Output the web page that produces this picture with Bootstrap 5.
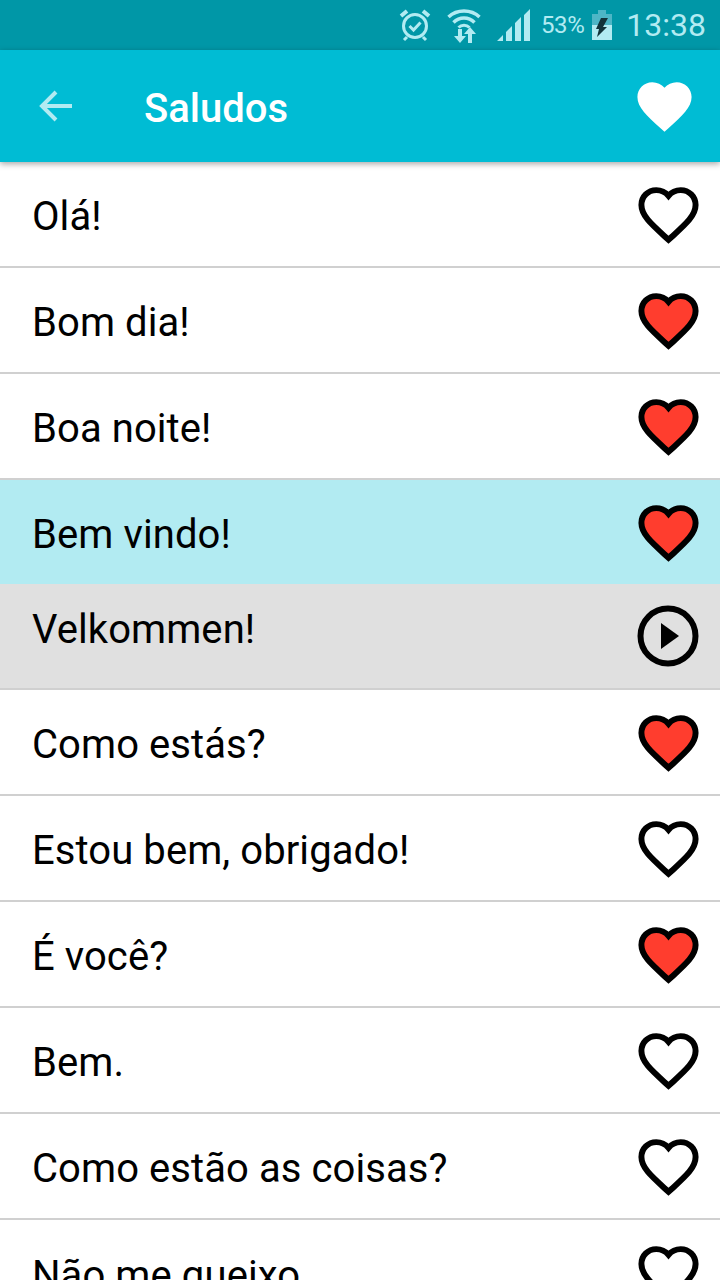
<!DOCTYPE html>
<html lang="en">
<head>
    <meta charset="UTF-8">
    <meta name="viewport" content="width=device-width, initial-scale=1.0">
    <title>Saludos</title>
    <link href="https://cdn.jsdelivr.net/npm/bootstrap@5.3.2/dist/css/bootstrap.min.css" rel="stylesheet">
    <style>
        html, body { height: 1280px; overflow: hidden; }
        body { font-family: Roboto, sans-serif; background: #fff; color: #000; }
        .status-strip { height: 50px; background: #0097a7; color: #b2ebf2; padding-right: 14px; }
        .status-pct { font-size: 24px; letter-spacing: -.4px; line-height: 50px; margin-left: 11px; }
        .status-time { font-size: 32px; line-height: 50px; margin-left: 14px; }
        .app-head { height: 112px; background: #00bcd4; padding: 0 23px 0 38px; box-shadow: 0 2px 6px rgba(0,0,0,.35); position: relative; z-index: 2; }
        .app-title { font-size: 40px; font-weight: 500; color: #fff; margin-left: 72px; margin-top: 6px; }
        .list-group-flush > .phrase-row { height: 106px; padding: 0 19px 0 32px; border-width: 0 0 2px; border-color: #d0d0d0; border-radius: 0; font-size: 40px; letter-spacing: .08px; color: #000; background: #fff; }
        .list-group-flush > .phrase-row.row-selected { background: #b2ebf2; height: 104px; border-bottom-width: 0; }
        .list-group-flush > .phrase-row.row-playing { background: #e0e0e0; padding-bottom: 18px; }
        .phrase-row.row-playing svg { margin-top: 18px; margin-right: 2px; }
        .phrase-label { margin-top: 6px; }
        .heart-line { fill: none; stroke: #000; stroke-width: 2.2; }
        .heart-red { fill: #ff3d2e; stroke: #000; stroke-width: 2.2; }
    </style>
</head>
<body>
    <div class="status-strip d-flex align-items-center justify-content-end">
        <svg width="32" height="34" viewBox="0 0 32 34" class="me-3" fill="none" stroke="#b2ebf2">
            <circle cx="16" cy="18" r="11.5" stroke-width="3"/>
            <path d="M10.5 18l4 4 7-7.5" stroke-width="3"/>
            <path d="M2 8l6-5M30 8l-6-5" stroke-width="4"/>
            <path d="M8 29l-3 3M24 29l3 3" stroke-width="3"/>
        </svg>
        <svg width="34" height="36" viewBox="0 0 34 36" class="me-3" fill="none" stroke="#b2ebf2">
            <path d="M1.5 10C10 2 24 2 32.5 10" stroke-width="3.500"/>
            <path d="M6.500 15.500C12.500 9.500 21.500 9.500 27.500 15.500" stroke-width="3.500"/>
            <path d="M11.500 20.500C14.500 17.500 19.500 17.500 22.500 20.500" stroke-width="3"/>
            <path d="M13 36l-6-7h4v-7h4v7h4zM23 20l6 7h-4v9h-4v-9h-4z" fill="#b2ebf2" stroke="none"/>
        </svg>
        <svg width="33" height="32" viewBox="0 0 33 32" fill="#b2ebf2">
            <path d="M0 32l6-6v6zM9 32V23l6-6v15zM18 32V14l6-6v24zM27 32V6l6-6v32z"/>
        </svg>
        <span class="status-pct">53%</span>
        <svg width="20" height="30" viewBox="0 0 20 30" class="ms-2">
            <path d="M6 0h8v4h6v26H0V4h6z" fill="#4db6c6"/>
            <path d="M0 15h20v15H0z" fill="#b2ebf2"/>
            <path d="M9 8h7l-5 9h4L5 27l2-8H4z" fill="#12333a"/>
        </svg>
        <span class="status-time">13:38</span>
    </div>

    <nav class="navbar app-head d-flex flex-nowrap align-items-center">
        <div class="d-flex align-items-center">
            <svg width="34" height="34" viewBox="0 0 34 34" fill="none" stroke="#b2ebf2" stroke-width="4">
                <path d="M34 17H4M18 3L4 17l14 14"/>
            </svg>
            <span class="app-title">Saludos</span>
        </div>
        <svg width="65" height="65" viewBox="0 0 24 24" fill="#fff">
            <path d="M12 21.350l-1.450-1.320C5.400 15.360 2 12.280 2 8.500 2 5.420 4.420 3 7.500 3c1.740 0 3.410.810 4.500 2.090C13.090 3.810 14.760 3 16.500 3 19.580 3 22 5.420 22 8.500c0 3.780-3.400 6.860-8.550 11.540L12 21.350z"/>
        </svg>
    </nav>

    <div id="phrases" class="list-group list-group-flush"></div>

    <script>
        // name, icon, optional row state
        const phrases = [
            ['Olá!', 'line'],
            ['Bom dia!', 'red'],
            ['Boa noite!', 'red'],
            ['Bem vindo!', 'red', 'row-selected'],
            ['Velkommen!', 'play', 'row-playing'],
            ['Como estás?', 'red'],
            ['Estou bem, obrigado!', 'line'],
            ['É você?', 'red'],
            ['Bem.', 'line'],
            ['Como estão as coisas?', 'line'],
            ['Não me queixo.', 'line']
        ];

        const heartPath = 'M12 21.350l-1.450-1.320C5.400 15.360 2 12.280 2 8.500 2 5.420 4.420 3 7.500 3c1.740 0 3.410.810 4.500 2.090C13.090 3.810 14.760 3 16.500 3 19.580 3 22 5.420 22 8.500c0 3.780-3.400 6.860-8.550 11.540L12 21.350z';

        function iconFor(kind) {
            if (kind === 'play') {
                return `<svg width="62" height="62" viewBox="0 0 62 62"><circle cx="31" cy="31" r="27.500" fill="none" stroke="#000" stroke-width="6"/><path d="M24 18l18 13-18 13z"/></svg>`;
            }
            const cls = kind === 'red' ? 'heart-red' : 'heart-line';
            return `<svg width="65" height="65" viewBox="0 0 24 24"><path class="${cls}" d="${heartPath}"/></svg>`;
        }

        document.getElementById('phrases').innerHTML = phrases.map(([text, icon, state]) => `
            <div class="list-group-item phrase-row d-flex align-items-center justify-content-between ${state || ''}">
                <span class="phrase-label">${text}</span>
                ${iconFor(icon)}
            </div>`).join('');
    </script>
    <script src="https://cdn.jsdelivr.net/npm/bootstrap@5.3.2/dist/js/bootstrap.bundle.min.js"></script>
</body>
</html>
